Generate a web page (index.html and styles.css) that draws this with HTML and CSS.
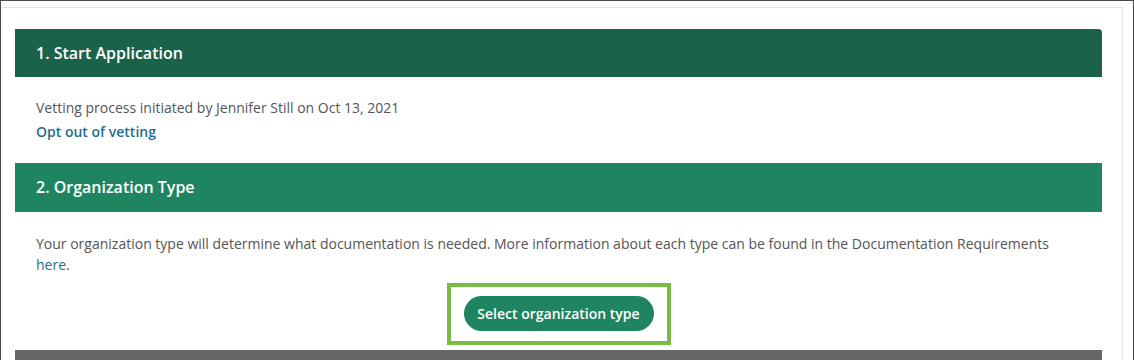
FILE: index.html
```html
<!DOCTYPE html>
<html lang="en">
<head>
<meta charset="utf-8">
<title>Vetting Application</title>
<link rel="stylesheet" href="styles.css">
</head>
<body>
<div class="frame">
  <div class="panel">
    <section class="step">
      <h2 class="step-head step-head--done">1. Start Application</h2>
      <div class="step-body step-body--first">
        <p class="meta">Vetting process initiated by Jennifer Still on Oct 13, 2021</p>
        <a class="link link--strong" href="#">Opt out of vetting</a>
      </div>
    </section>
    <section class="step">
      <h2 class="step-head step-head--active">2. Organization Type</h2>
      <div class="step-body step-body--second">
        <p class="desc">Your organization type will determine what documentation is needed. More information about each type can be found in the Documentation Requirements <a class="link" href="#">here</a>.</p>
        <div class="action">
          <div class="highlight">
            <button class="btn" type="button">Select organization type</button>
          </div>
        </div>
      </div>
    </section>
    <section class="step">
      <div class="step-head step-head--locked"></div>
    </section>
  </div>
</div>
</body>
</html>
```
FILE: styles.css
```css
html, body {
  margin: 0;
  padding: 0;
  background: #ffffff;
}
body {
  font-family: "Open Sans", "Liberation Sans", sans-serif;
  color: #555555;
}
.frame {
  width: 1134px;
  height: 360px;
  box-sizing: border-box;
  border: 1px solid #4a4a4a;
  border-bottom: none;
  overflow: hidden;
}
.panel {
  margin: 6px 10px 0 0;
  border-top: 1px solid #e3e3e3;
  border-right: 1px solid #e3e3e3;
  padding: 21px 20px 0 14px;
  height: 400px;
}
.step-head {
  margin: 0;
  height: 48px;
  line-height: 48px;
  padding-left: 21px;
  font-size: 16px;
  font-weight: 600;
  color: #ffffff;
  border-top-right-radius: 4px;
}
.step-head--done { background: #1a6249; }
.step-head--active { background: #1e8560; height: 49px; line-height: 48px; border-top-right-radius: 0; }
.step-head--locked { background: #666666; border-top-right-radius: 0; }
.step-body {
  padding: 0 21px;
  font-size: 14px;
}
.step-body--first {
  padding-top: 19px;
  padding-bottom: 19px;
  line-height: 24px;
}
.step-body--second {
  padding-top: 21px;
  padding-bottom: 5px;
  line-height: 21px;
}
.meta, .desc {
  margin: 0;
}
.link {
  color: #1f6e8c;
  text-decoration: none;
}
.link--strong {
  display: block;
  font-weight: 600;
}
.action {
  display: flex;
  justify-content: center;
  padding-top: 8px;
}
.highlight {
  border: 4px solid #78bc45;
  padding: 9px 13px 10px;
}
.btn {
  display: block;
  width: 190px;
  height: 35px;
  border: none;
  border-radius: 18px;
  background: #1e8560;
  color: #ffffff;
  font-family: "Open Sans", "Liberation Sans", sans-serif;
  font-size: 14px;
  font-weight: 600;
  padding: 0;
  cursor: pointer;
}
```
